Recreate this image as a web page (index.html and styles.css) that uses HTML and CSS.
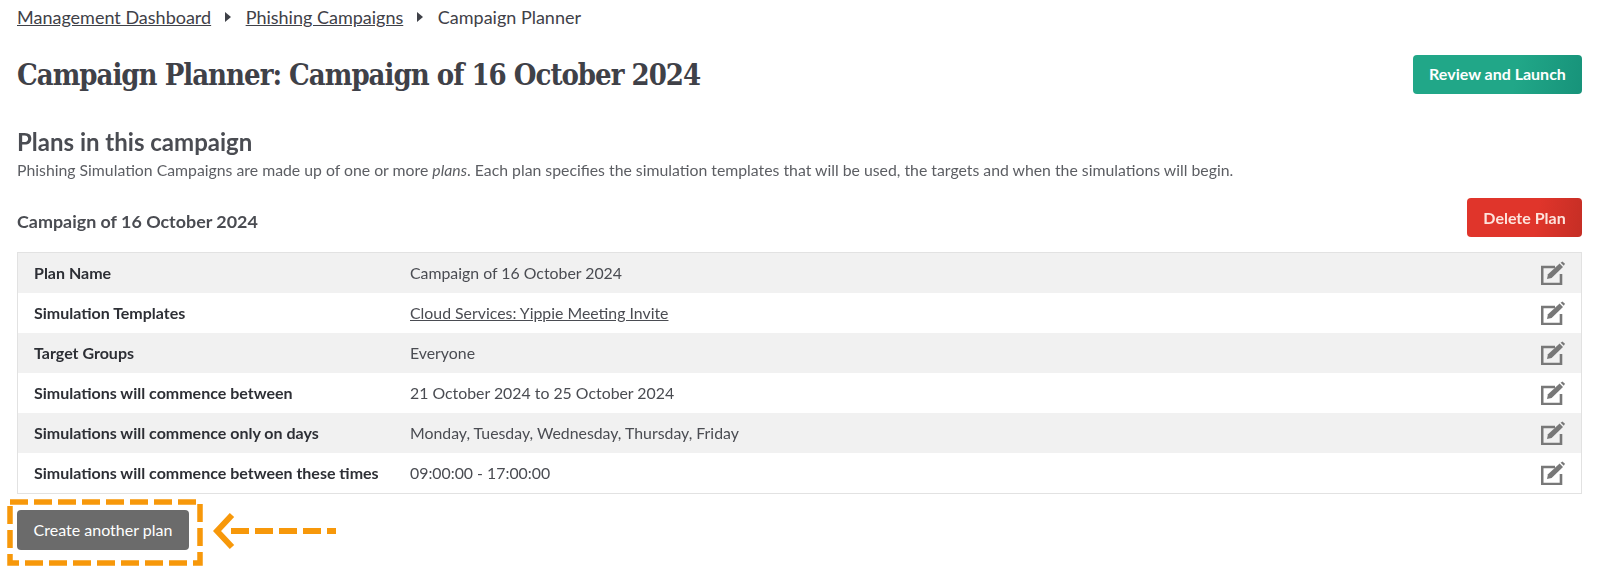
FILE: index.html
```html
<!DOCTYPE html>
<html lang="en">
<head>
    <meta charset="UTF-8">
    <title>Campaign Planner</title>
    <link rel="stylesheet" href="styles.css">
</head>
<body>
    <svg class="icon-defs" width="0" height="0">
        <symbol id="edit-icon" viewBox="0 0 24 24">
            <path d="M14 6H1.2V23H20V13" fill="none" stroke="currentColor" stroke-width="2.6"/>
            <path d="M6 18L7 13.2L18.6 2.6L22 6L10.6 17Z" fill="currentColor"/>
            <path d="M19.6 1.8L21.4 0.4L24 2.8L22.8 4.8Z" fill="currentColor"/>
        </symbol>
    </svg>

    <nav class="breadcrumb">
        <a href="#">Management Dashboard</a>
        <span class="crumb-arrow"></span>
        <a href="#">Phishing Campaigns</a>
        <span class="crumb-arrow"></span>
        <span>Campaign Planner</span>
    </nav>

    <header class="page-header">
        <h1>Campaign Planner: Campaign of 16 October 2024</h1>
        <button class="btn btn-green">Review and Launch</button>
    </header>

    <section class="plans">
        <div class="soft">
            <h2>Plans in this campaign</h2>
            <p class="intro">Phishing Simulation Campaigns are made up of one or more <em>plans</em>. Each plan specifies the simulation templates that will be used, the targets and when the simulations will begin.</p>

            <div class="plan-header">
                <h3>Campaign of 16 October 2024</h3>
                <button class="btn btn-red">Delete Plan</button>
            </div>

            <div class="plan-table">
                <div class="plan-row">
                    <div class="plan-label">Plan Name</div>
                    <div class="plan-value">Campaign of 16 October 2024</div>
                    <svg class="edit-icon"><use href="#edit-icon"/></svg>
                </div>
                <div class="plan-row">
                    <div class="plan-label">Simulation Templates</div>
                    <div class="plan-value"><a href="#">Cloud Services: Yippie Meeting Invite</a></div>
                    <svg class="edit-icon"><use href="#edit-icon"/></svg>
                </div>
                <div class="plan-row">
                    <div class="plan-label">Target Groups</div>
                    <div class="plan-value">Everyone</div>
                    <svg class="edit-icon"><use href="#edit-icon"/></svg>
                </div>
                <div class="plan-row">
                    <div class="plan-label">Simulations will commence between</div>
                    <div class="plan-value">21 October 2024 to 25 October 2024</div>
                    <svg class="edit-icon"><use href="#edit-icon"/></svg>
                </div>
                <div class="plan-row">
                    <div class="plan-label">Simulations will commence only on days</div>
                    <div class="plan-value">Monday, Tuesday, Wednesday, Thursday, Friday</div>
                    <svg class="edit-icon"><use href="#edit-icon"/></svg>
                </div>
                <div class="plan-row">
                    <div class="plan-label">Simulations will commence between these times</div>
                    <div class="plan-value">09:00:00 - 17:00:00</div>
                    <svg class="edit-icon"><use href="#edit-icon"/></svg>
                </div>
            </div>
        </div>

        <button class="btn btn-grey">Create another plan</button>
    </section>

    <!-- annotation drawn over the screenshot -->
    <svg class="callout-box" width="196" height="67" viewBox="0 0 196 67">
        <rect x="3" y="3" width="190" height="61" fill="none" stroke="#f7980a" stroke-width="5.5" stroke-dasharray="18 6"/>
    </svg>
    <svg class="callout-arrow" width="124" height="38" viewBox="0 0 124 38">
        <path d="M19 3L4 19L19 35" fill="none" stroke="#f7980a" stroke-width="6"/>
        <path d="M18 19H123" fill="none" stroke="#f7980a" stroke-width="6" stroke-dasharray="18 6"/>
    </svg>
</body>
</html>
```

FILE: styles.css
```css
* {
    margin: 0;
    padding: 0;
    box-sizing: border-box;
}

body {
    position: relative;
    height: 575px;
    padding: 0 42px 0 17px;
    background-color: white;
    color: #3f4148;
    font-family: 'Lato', sans-serif;
    overflow: hidden;
}

.icon-defs {
    position: absolute;
}

a {
    color: inherit;
}

.breadcrumb {
    display: flex;
    align-items: center;
    height: 34px;
    font-size: 18px;
}

.crumb-arrow {
    width: 0;
    height: 0;
    margin: 0 14.5px 0 14px;
    border-top: 5px solid transparent;
    border-bottom: 5px solid transparent;
    border-left: 6px solid #3f4148;
}

.page-header {
    display: flex;
    justify-content: space-between;
    align-items: center;
    height: 39px;
    margin-top: 21px;
}

h1 {
    font-family: 'DejaVu Serif', serif;
    font-stretch: condensed;
    font-size: 29px;
    font-weight: 700;
    letter-spacing: -1px;
}

.btn {
    height: 39px;
    border: none;
    border-radius: 4px;
    color: white;
    font-family: 'Lato', sans-serif;
    font-size: 16px;
    font-weight: 700;
}

.btn-green {
    width: 169px;
    padding-bottom: 3px;
    background: linear-gradient(100deg, #21a788 60%, #17937a);
}

.btn-red {
    width: 115px;
    background: linear-gradient(100deg, #e0352b 60%, #c52e25);
    color: #fde3dc;
}

.btn-grey {
    display: block;
    width: 172px;
    height: 40px;
    margin-top: 16px;
    padding-bottom: 1px;
    background-color: #6b6b6b;
    font-weight: 400;
}

.plans {
    margin-top: 33px;
}

/* this part of the screenshot is a bit soft */
.soft {
    filter: blur(0.5px);
}

h2 {
    font-size: 24px;
    line-height: 29px;
    font-weight: 700;
    color: #4a4c52;
}

.intro {
    margin-top: 4px;
    font-size: 15.8px;
    line-height: 19px;
    color: #5c5e63;
}

.plan-header {
    display: flex;
    justify-content: space-between;
    align-items: center;
    height: 39px;
    margin-top: 19px;
}

h3 {
    margin-top: 7px;
    font-size: 17.9px;
    font-weight: 700;
    color: #4a4c52;
}

.plan-table {
    margin-top: 15px;
    border: 1px solid #e2e2e2;
}

.plan-row {
    display: grid;
    grid-template-columns: 376px 1fr 24px;
    align-items: center;
    height: 40px;
    padding: 0 16px 1px;
    font-size: 15.85px;
}

.plan-row:nth-child(odd) {
    background-color: #f1f1f1;
}

.plan-label {
    font-size: 16px;
    font-weight: 700;
    color: #2d2f35;
}

.plan-value {
    color: #4a4c52;
}

.edit-icon {
    width: 24px;
    height: 24px;
    color: #787878;
}

.callout-box {
    position: absolute;
    top: 499px;
    left: 7px;
}

.callout-arrow {
    position: absolute;
    top: 512px;
    left: 213px;
}
```
